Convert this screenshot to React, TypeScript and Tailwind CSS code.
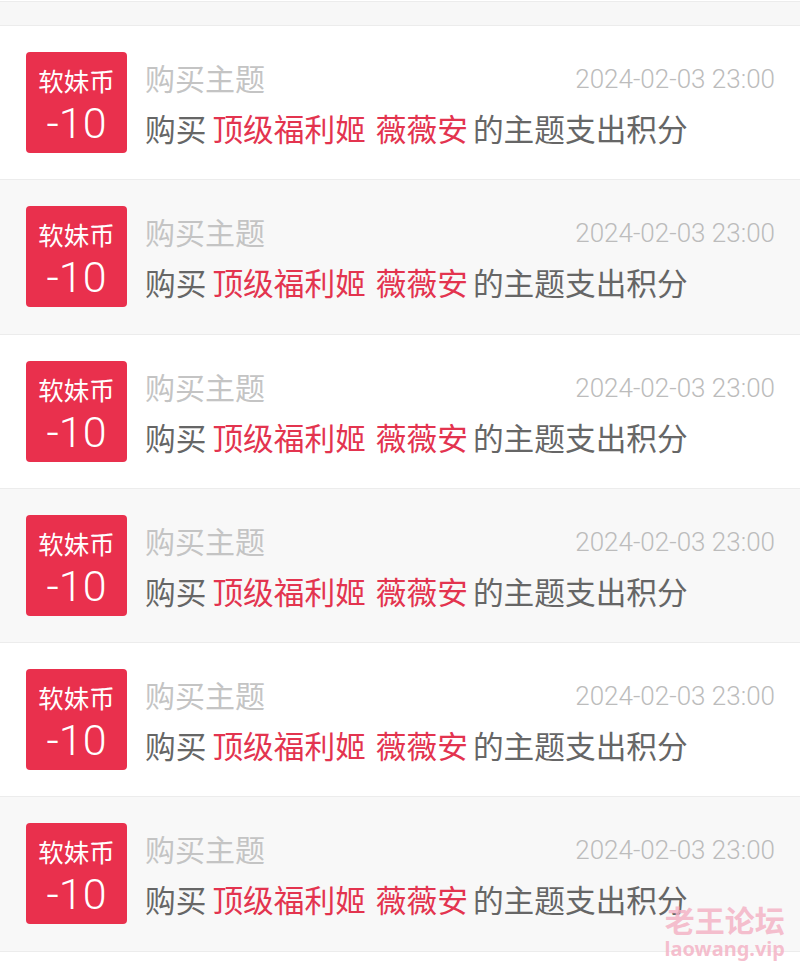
import React from 'react';

const rows = Array.from({ length: 6 }, (_, i) => i);

function Row({ shaded }: { shaded: boolean }) {
  return (
    <div
      className={`flex h-[154.3px] border-b border-[#ececec] pl-[26px] pr-[25px] pt-[26px] ${
        shaded ? 'bg-[#f8f8f8]' : 'bg-white'
      }`}
    >
      <div className="flex h-[101px] w-[101px] shrink-0 flex-col items-center rounded-[4px] bg-[#e9304d] pt-[12px] text-white">
        <span className="text-[25.5px] leading-[32px]">软妹币</span>
        <span className="mt-[3px] font-['Roboto'] text-[43px] font-light leading-[48px]">-10</span>
      </div>
      <div className="ml-[18px] flex min-w-0 flex-1 flex-col">
        <div className="flex h-[51px] items-center justify-between">
          <span className="text-[30px] text-[#c4c4c4]">购买主题</span>
          <span className="mt-[4px] font-['Roboto'] text-[26px] font-light text-[#bcbcbc]">2024-02-03 23:00</span>
        </div>
        <div className="flex h-[50px] items-center whitespace-nowrap text-[30.7px] text-[#666666]">
          <span>购买</span>
          <span className="ml-[6px] text-[#e3344f]">顶级福利姬</span>
          <span className="ml-[10px] text-[#e3344f]">薇薇安</span>
          <span className="ml-[5px]">的主题支出积分</span>
        </div>
      </div>
    </div>
  );
}

export default function App() {
  return (
    <div className="relative h-[972px] w-[800px] overflow-hidden bg-white font-['Noto_Sans_CJK_SC',sans-serif]">
      <div className="mt-px h-[25px] border-y border-[#ececec] bg-[#f7f7f7]" />
      {rows.map((i) => (
        <Row key={i} shaded={i % 2 === 1} />
      ))}
      <div className="pointer-events-none absolute right-[15px] top-[904px] flex flex-col items-center leading-none text-[#f4b4c6]/85">
        <span className="text-[30px] font-bold">老王论坛</span>
        <span className="mt-[5px] font-['Noto_Sans',sans-serif] text-[20px] font-bold">laowang.vip</span>
      </div>
    </div>
  );
}
